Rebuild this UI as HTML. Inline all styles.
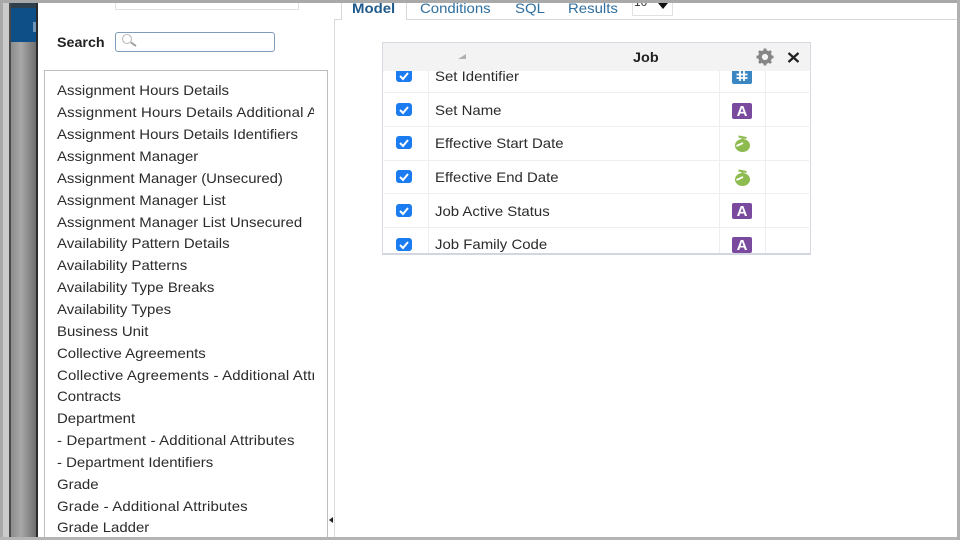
<!DOCTYPE html>
<html lang="en"><head><meta charset="utf-8"><title>Job Model</title>
<style>
html,body{margin:0;padding:0;background:#fff}
#p{position:relative;width:960px;height:540px;overflow:hidden;background:#fff;font-family:"Liberation Sans",sans-serif;color:#2b2b2b;filter:blur(.35px)}
#p div{position:absolute}
.t{white-space:nowrap;font-size:14px;letter-spacing:0;line-height:16px;transform:scaleX(1.068);transform-origin:0 50%}
.w{letter-spacing:.15px}
.ck{width:16px;height:13px;background:#1a7cf0;border-radius:3px}
.ck svg{position:absolute;left:2px;top:1px}
.h{height:1px;left:384px;width:425px;background:#eeeeee}
.A{width:20px;height:16px;background:#7a4a9e;border-radius:2px;color:#fff;font-weight:bold;font-size:15px;line-height:17px;text-align:center;overflow:hidden}
</style></head><body><div id="p">
<div style="left:0;top:0;width:3px;height:540px;background:#a9a9a9"></div>
<div style="left:3px;top:0;width:6px;height:540px;background:#cbcbcb"></div>
<div style="left:9px;top:0;width:2px;height:540px;background:#4a4a4a"></div>
<div style="left:11px;top:0;width:25px;height:540px;background:linear-gradient(90deg,#8c8c8c,#a8a8a8 40%,#6e6e6e)"></div>
<div style="left:11px;top:3px;width:25px;height:5px;background:#2f3f4c"></div>
<div style="left:11px;top:8px;width:25px;height:34px;background:#0d4f86"></div>
<div style="left:33px;top:22px;width:3px;height:10px;background:#6f94b5"></div>
<div style="left:36px;top:0;width:2px;height:540px;background:#2a2a2a"></div>

<div style="left:115px;top:0;width:184px;height:10px;border:1px solid #e2e2e2;border-top:0;box-sizing:border-box;background:#fff"></div>

<div class="t" style="left:57px;top:34px;font-weight:bold;color:#222;transform:scaleX(1.02)">Search</div>
<div style="left:115px;top:32px;width:160px;height:20px;box-sizing:border-box;border:1px solid #7d9cbb;border-radius:3px;background:#fff"></div>
<svg style="position:absolute;left:120px;top:33px" width="20" height="16" viewBox="0 0 20 16"><circle cx="7" cy="6" r="4.500" fill="none" stroke="#bcbcbc" stroke-width="1.100"/><path d="M11 9.500l5 3.500" stroke="#9a9a9a" stroke-width="1.800" fill="none"/></svg>

<div style="left:44px;top:70px;width:284px;height:480px;box-sizing:border-box;border:1px solid #bdbdbd;background:#fff"></div>
<div style="left:45px;top:71px;width:269px;height:469px;overflow:hidden">
<div class="t" style="left:12px;top:11px">Assignment Hours Details</div>
<div class="t w" style="left:12px;top:33px">Assignment Hours Details Additional Attributes</div>
<div class="t" style="left:12px;top:55px">Assignment Hours Details Identifiers</div>
<div class="t" style="left:12px;top:77px">Assignment Manager</div>
<div class="t" style="left:12px;top:99px;letter-spacing:-.06px">Assignment Manager (Unsecured)</div>
<div class="t" style="left:12px;top:121px">Assignment Manager List</div>
<div class="t" style="left:12px;top:143px">Assignment Manager List Unsecured</div>
<div class="t" style="left:12px;top:164px">Availability Pattern Details</div>
<div class="t" style="left:12px;top:186px">Availability Patterns</div>
<div class="t" style="left:12px;top:208px">Availability Type Breaks</div>
<div class="t" style="left:12px;top:230px">Availability Types</div>
<div class="t" style="left:12px;top:252px">Business Unit</div>
<div class="t" style="left:12px;top:274px">Collective Agreements</div>
<div class="t w" style="left:12px;top:296px">Collective Agreements - Additional Attributes</div>
<div class="t" style="left:12px;top:317px">Contracts</div>
<div class="t" style="left:12px;top:339px">Department</div>
<div class="t w" style="left:12px;top:361px">- Department - Additional Attributes</div>
<div class="t" style="left:12px;top:383px">- Department Identifiers</div>
<div class="t" style="left:12px;top:405px">Grade</div>
<div class="t w" style="left:12px;top:427px">Grade - Additional Attributes</div>
<div class="t" style="left:12px;top:448px">Grade Ladder</div>
</div>

<div style="left:334px;top:19px;width:1px;height:521px;background:#dcdcdc"></div>
<div style="left:329px;top:517px;width:0;height:0;border:3px solid transparent;border-right:4px solid #222;border-left:0"></div>

<div style="left:334px;top:19px;width:626px;height:1px;background:#d8d8d8"></div>
<div style="left:341px;top:0;width:66px;height:20px;box-sizing:border-box;border:1px solid #d8d8d8;border-top:0;border-bottom:0;background:#fff"></div>
<div class="t" style="left:352px;top:0;font-weight:bold;color:#1f5a8c">Model</div>
<div class="t" style="left:420px;top:0;color:#2f6f9f">Conditions</div>
<div class="t" style="left:515px;top:0;color:#2f6f9f">SQL</div>
<div class="t" style="left:568px;top:0;color:#2f6f9f">Results</div>
<div style="left:632px;top:0;width:41px;height:16px;box-sizing:border-box;border:1px solid #e2e2e2;border-top:0;background:#fff;overflow:hidden"><div style="left:1px;top:-5px;font-size:12px;line-height:14px;color:#333">10</div></div>
<div style="left:658px;top:3px;width:0;height:0;border-left:5px solid transparent;border-right:5px solid transparent;border-top:6px solid #111"></div>

<div style="left:382px;top:42px;width:429px;height:213px;box-sizing:border-box;border:1px solid #d6d9df;border-bottom:2px solid #d2d6e0;background:#fff"></div>
<div style="left:383px;top:43px;width:427px;height:28px;background:#f3f3f3"></div>
<div style="left:458px;top:54px;width:0;height:0;border-left:8px solid transparent;border-bottom:5px solid #b0b0b0"></div>
<div class="t" style="left:633px;top:49px;font-weight:bold;color:#222;transform:scaleX(1.03)">Job</div>
<svg style="position:absolute;left:755px;top:47px" width="20" height="20" viewBox="0 0 20 20"><circle cx="10" cy="10" r="5" fill="none" stroke="#858585" stroke-width="3.800"/><path d="M10 1.500V5M10 15v3.500M1.500 10H5M15 10h3.500M4 4l2.500 2.500M13.500 13.500L16 16M16 4l-2.500 2.500M6.500 13.500L4 16" stroke="#858585" stroke-width="2.800" fill="none"/></svg>
<svg style="position:absolute;left:787px;top:51px" width="13" height="13" viewBox="0 0 13 13"><path d="M1.500 2l10 9M11.500 2l-10 9" stroke="#222" stroke-width="2.300" fill="none"/></svg>

<div style="left:428px;top:71px;width:1px;height:182px;background:#eeeeee"></div>
<div style="left:719px;top:71px;width:1px;height:182px;background:#eeeeee"></div>
<div style="left:765px;top:71px;width:1px;height:182px;background:#eeeeee"></div>
<div class="h" style="top:92px"></div>
<div class="h" style="top:126px"></div>
<div class="h" style="top:160px"></div>
<div class="h" style="top:193px"></div>
<div class="h" style="top:227px"></div>

<div style="left:383px;top:71px;width:427px;height:182px;overflow:hidden">
<div class="ck" style="left:13px;top:-2px"><svg width="12" height="11" viewBox="0 0 12 11"><path d="M2 6l3 3 5-6" stroke="#fff" stroke-width="2" fill="none"/></svg></div>
<div class="ck" style="left:13px;top:32px"><svg width="12" height="11" viewBox="0 0 12 11"><path d="M2 6l3 3 5-6" stroke="#fff" stroke-width="2" fill="none"/></svg></div>
<div class="ck" style="left:13px;top:65px"><svg width="12" height="11" viewBox="0 0 12 11"><path d="M2 6l3 3 5-6" stroke="#fff" stroke-width="2" fill="none"/></svg></div>
<div class="ck" style="left:13px;top:99px"><svg width="12" height="11" viewBox="0 0 12 11"><path d="M2 6l3 3 5-6" stroke="#fff" stroke-width="2" fill="none"/></svg></div>
<div class="ck" style="left:13px;top:133px"><svg width="12" height="11" viewBox="0 0 12 11"><path d="M2 6l3 3 5-6" stroke="#fff" stroke-width="2" fill="none"/></svg></div>
<div class="ck" style="left:13px;top:167px"><svg width="12" height="11" viewBox="0 0 12 11"><path d="M2 6l3 3 5-6" stroke="#fff" stroke-width="2" fill="none"/></svg></div>
<div class="t" style="left:52px;top:-3px">Set Identifier</div>
<div class="t" style="left:52px;top:31px">Set Name</div>
<div class="t" style="left:52px;top:64px">Effective Start Date</div>
<div class="t" style="left:52px;top:98px">Effective End Date</div>
<div class="t" style="left:52px;top:132px">Job Active Status</div>
<div class="t" style="left:52px;top:165px">Job Family Code</div>

<div style="left:349px;top:-2px;width:20px;height:15px;background:#3b87c4;border-radius:2px"></div>
<svg style="position:absolute;left:349px;top:-2px" width="20" height="15" viewBox="0 0 20 15"><path d="M8 2v10M12 2v10M4.500 5.500h11M4.500 9h11" stroke="#fff" stroke-width="1.800" fill="none"/></svg>
<div class="A" style="left:349px;top:32px">A</div>
<svg style="position:absolute;left:351px;top:64px" width="17" height="18" viewBox="0 0 17 18"><ellipse cx="8.500" cy="10.500" rx="7.500" ry="6.500" fill="#8dbb4f"/><path d="M4.500 1.500l8 1.500M8.500 2v4" stroke="#8dbb4f" stroke-width="2" fill="none"/><path d="M2.500 11l6.500-3" stroke="#fff" stroke-width="1.800"/></svg>
<svg style="position:absolute;left:351px;top:98px" width="17" height="18" viewBox="0 0 17 18"><ellipse cx="8.500" cy="10.500" rx="7.500" ry="6.500" fill="#8dbb4f"/><path d="M4.500 1.500l8 1.500M8.500 2v4" stroke="#8dbb4f" stroke-width="2" fill="none"/><path d="M2.500 11l6.500-3" stroke="#fff" stroke-width="1.800"/></svg>
<div class="A" style="left:349px;top:132px">A</div>
<div class="A" style="left:349px;top:166px">A</div>
</div>

<div style="left:0;top:0;width:960px;height:3px;background:#a9a9a9"></div>
<div style="left:0;top:537px;width:960px;height:3px;background:#b4b4b4"></div>
<div style="left:957px;top:0;width:3px;height:540px;background:#b0b0b0"></div>
</div></body></html>
